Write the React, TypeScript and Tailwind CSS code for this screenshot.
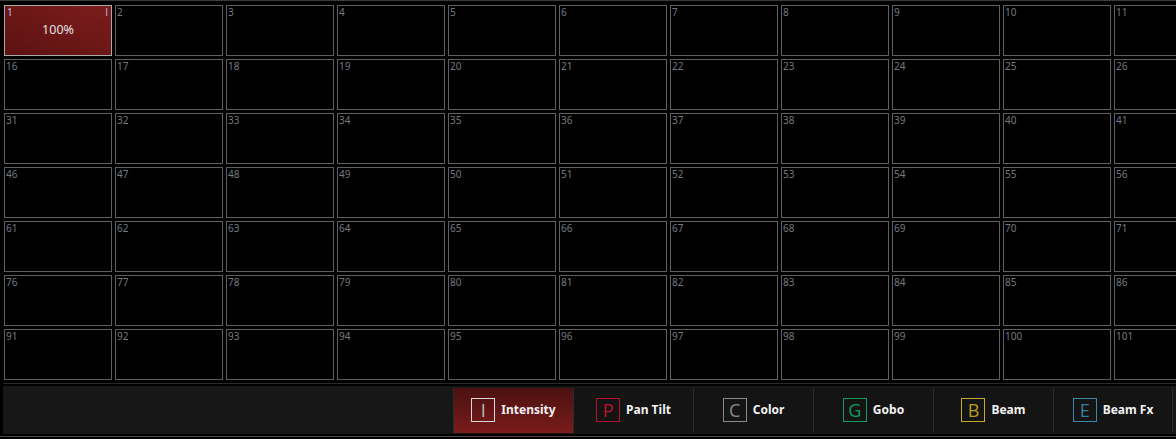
const COLS = 15;
const ROWS = 7;

const attrs = [
  { key: 'I', label: 'Intensity', box: 'border-[#d8d8d8] text-[#bdbdbd]', active: true },
  { key: 'P', label: 'Pan Tilt', box: 'border-[#b8102c] text-[#c0102e]' },
  { key: 'C', label: 'Color', box: 'border-[#8a8a8a] text-[#8a8a8a]' },
  { key: 'G', label: 'Gobo', box: 'border-[#139a5e] text-[#139a5e]' },
  { key: 'B', label: 'Beam', box: 'border-[#c9a826] text-[#b89a22]' },
  { key: 'E', label: 'Beam Fx', box: 'border-[#3b8aa8] text-[#3b7f9c]' },
];

const Cell = ({ n }: { n: number }) => {
  if (n === 1) {
    return (
      <div className="relative h-[51px] w-[108px] border border-[#a9a9a9] bg-linear-to-bl from-[#7c1c1c] to-[#5c1212]">
        <span className="absolute left-[2px] top-0 text-[10px] leading-[13px] text-[#cbb8ec]">1</span>
        <span className="absolute right-[3px] top-0 font-['Open_Sans'] text-[10px] leading-[13px] text-[#cbb8ec]">I</span>
        <div className="flex h-full items-center justify-center pb-[1px] text-[12.5px] text-[#e2e2e2]">100%</div>
      </div>
    );
  }
  return (
    <div className="h-[51px] w-[108px] border border-[#5f5f5f] bg-black">
      <span className="block pl-[1px] text-[10px] leading-[13px] text-[#737980]">{n}</span>
    </div>
  );
};

export default function App() {
  const cells: number[] = [];
  for (let r = 0; r < ROWS; r++) {
    for (let c = 0; c < COLS; c++) cells.push(r * COLS + c + 1);
  }

  return (
    <div
      className="h-[439px] w-[1176px] overflow-hidden bg-black border-t border-[#3a3a3a]"
      style={{ fontFamily: '"Noto Sans", "Open Sans", sans-serif' }}
    >
      <div className="overflow-hidden pl-[4px] pt-[4px]">
        <div className="grid w-max grid-cols-[repeat(15,108px)] gap-[3px]">
          {cells.map(n => (
            <Cell key={n} n={n} />
          ))}
        </div>
      </div>

      <div className="ml-[3px] mt-[3px] border-t border-[#2a2a2a] pt-[2px]">
        <div className="flex h-[48px] items-center justify-end bg-[#171717] pr-[3px]">
          {attrs.map((a, i) => (
            <div
              key={a.key}
              className={`flex h-[45px] w-[120px] items-center justify-center gap-[6px] border-l border-[#2c2c2c] ${
                i === attrs.length - 1 ? 'border-r' : ''
              } ${a.active ? 'bg-linear-to-b from-[#4b1111] to-[#7a1b1b]' : 'bg-[#141414]'}`}
            >
              <div
                className={`flex h-[24px] w-[24px] items-center justify-center border font-['Open_Sans'] text-[18px] font-normal leading-none ${a.box}`}
              >
                {a.key}
              </div>
              <span className="text-[12px] font-bold text-[#f2f2f2]">{a.label}</span>
            </div>
          ))}
        </div>
      </div>
      <div className="mt-[2px] h-px bg-[#4a4a4a]" />
    </div>
  );
}
